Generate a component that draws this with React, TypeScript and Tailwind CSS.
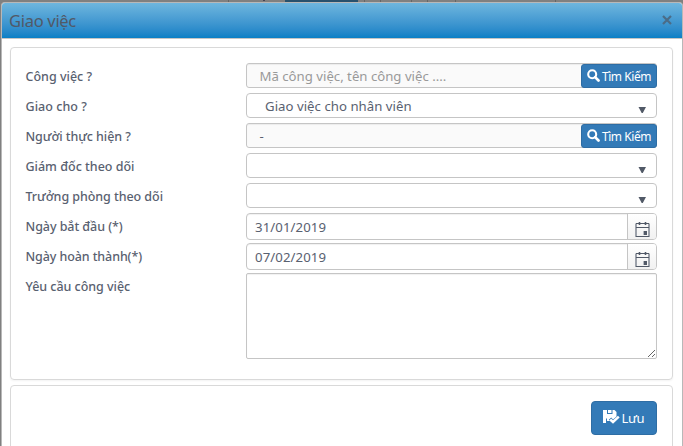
import type { ReactNode } from "react";

function Row({ label, tracking, children }: { label: string; tracking: string; children: ReactNode }) {
  return (
    <div className="flex h-[30px] items-start">
      <label className={`w-[221px] shrink-0 whitespace-nowrap pl-[0.5px] text-[12.5px] leading-[28px] font-medium text-[#596170] ${tracking}`}>
        {label}
      </label>
      {children}
    </div>
  );
}

function SearchField({ children }: { children: ReactNode }) {
  return (
    <div className="flex h-[25px] w-[411px] rounded-[3px] border border-[#c5c5c5] bg-[#fafafa] shadow-[inset_0_1px_1px_rgba(0,0,0,0.06)]">
      <div className="flex-1 whitespace-nowrap pl-[12.5px] text-[13.2px] leading-[25px]">{children}</div>
      <button className="-mr-px -mb-px flex h-6 w-[76px] items-center rounded-[3px] border border-[#2e6da4] bg-[#337ab7] pl-[5px] text-white">
        <svg width="13" height="13" viewBox="0 0 13 13" className="mt-[-1px] shrink-0">
          <circle cx="5.2" cy="5.2" r="4" fill="none" stroke="currentColor" strokeWidth="2.1" />
          <path d="M8.1 8.1 L11.5 11.5" stroke="currentColor" strokeWidth="2.7" strokeLinecap="round" />
        </svg>
        <span className="ml-[2px] whitespace-nowrap pt-px text-[12px] leading-5 tracking-[-0.45px]">Tìm Kiếm</span>
      </button>
    </div>
  );
}

function SelectField({ value }: { value?: string }) {
  return (
    <div className="flex h-[25px] w-[411px] justify-between rounded-[4px] border border-[#c5c5c5] bg-white pr-[10px] pl-[18px]">
      <span className="text-[13.2px] leading-[25px] tracking-[0.03px]">{value}</span>
      <svg width="8" height="6" viewBox="0 0 8 6" className="mt-[13px]">
        <path d="M0.5 0H8L4.8 6H3.7Z" fill="#515967" />
      </svg>
    </div>
  );
}

function DateField({ value }: { value: string }) {
  return (
    <div className="flex h-[27px] w-[411px] overflow-hidden rounded-[4px] border border-[#c5c5c5] bg-white shadow-[inset_0_1px_1px_rgba(0,0,0,0.06)]">
      <span className="flex-1 pl-2 text-[13.2px] leading-[26px] tracking-[0.1px]">{value}</span>
      <span className="flex w-[29px] border-l border-[#c5c5c5] bg-linear-to-b from-white to-[#f1f1f1] pt-2 pl-[7px]">
        <svg width="15" height="16" viewBox="0 0 15 16" fill="none">
          <path d="M1 1.5V15M14 1.5V15" stroke="#9ca1aa" strokeWidth="2" />
          <path d="M1 1.5H14M1 5.5H14M1 14.5H14" stroke="#515967" />
          <path d="M4.5 0V3M10.5 0V3" stroke="#515967" strokeWidth="1.6" />
          <path d="M8 9H10V13H8Z" fill="#b5b8be" />
          <path d="M9 9H12V13H9Z" fill="#515967" />
        </svg>
      </span>
    </div>
  );
}

export default function App() {
  return (
    <div className="flex h-[446px] w-[683px] flex-col overflow-hidden bg-[#808080] pl-px font-['Noto_Sans','Open_Sans',sans-serif] text-[#596170]">
      <div className="flex h-[2px] shrink-0">
        <span className="w-[7px]" />
        <span className="ml-[220px] w-px bg-[#666]" />
        <span className="ml-[34px] h-px w-[2px] bg-[#445]" />
        <span className="ml-[20px] w-[73px] bg-[#28516d]" />
        <span className="ml-[6px] w-px bg-[#666]" />
        <span className="ml-[15px] w-px bg-[#666]" />
        <span className="ml-[30px] w-px bg-[#666]" />
        <span className="ml-[15px] w-px bg-[#666]" />
        <span className="ml-[27px] w-px bg-[#666]" />
        <span className="ml-[99px] w-px bg-[#666]" />
      </div>
      <main className="min-h-0 flex-1 overflow-hidden rounded-t-[4px] border border-b-0 border-[#b8b8b8] bg-white">
        <header className="flex h-9 items-center justify-between border-b border-[#c5c5c5] bg-linear-to-b from-[#6eb6de] to-[#087fc5] pr-[10px] pl-[7px]">
          <h1 className="text-[16.5px] leading-[34px] tracking-[-0.3px] text-[#515967]">Giao việc</h1>
          <svg width="10" height="10" viewBox="0 0 10 10" className="mt-[-1px]">
            <path d="M1 1L9 9M9 1L1 9" stroke="#4b6c87" strokeWidth="2.2" />
          </svg>
        </header>
        <section className="mt-2 ml-2 h-[333px] w-[663px] rounded-[4px] border border-[#d9d9d9] pt-[15px] pl-[14px] shadow-[0_1px_2px_rgba(0,0,0,0.05)]">
          <Row label="Công việc ?" tracking="tracking-[0px]">
            <SearchField><span className="text-[#999]">Mã công việc, tên công việc ....</span></SearchField>
          </Row>
          <Row label="Giao cho ?" tracking="tracking-[0.05px]"><SelectField value="Giao việc cho nhân viên" /></Row>
          <Row label="Người thực hiện ?" tracking="tracking-[-0.08px]"><SearchField>-</SearchField></Row>
          <Row label="Giám đốc theo dõi" tracking="tracking-[0px]"><SelectField /></Row>
          <Row label="Trưởng phòng theo dõi" tracking="tracking-[-0.06px]"><SelectField /></Row>
          <Row label="Ngày bắt đầu (*)" tracking="tracking-[-0.06px]"><DateField value="31/01/2019" /></Row>
          <Row label="Ngày hoàn thành(*)" tracking="tracking-[-0.1px]"><DateField value="07/02/2019" /></Row>
          <Row label="Yêu cầu công việc" tracking="tracking-[-0.03px]">
            <textarea className="h-[86px] w-[411px] shrink-0 resize rounded-[2px] border border-[#c5c5c5] bg-white shadow-[inset_0_1px_1px_rgba(0,0,0,0.06)]" />
          </Row>
        </section>
        <footer className="mt-[5px] ml-2 flex h-20 w-[663px] items-start justify-end rounded-[4px] border border-[#d9d9d9] pt-[15px] pr-[15px]">
          <button className="flex h-[34px] w-[66px] items-center rounded-[4px] border border-[#2e6da4] bg-[#337ab7] pl-[11px] text-white">
            <svg width="17" height="14" viewBox="0 0 17 14" className="mt-[-3px] shrink-0">
              <path d="M0 0H11.5L13.5 2V6.5L10 9.4L8.2 7.5L5.8 9.8L7 11H4V8.5H3V13H0Z" fill="currentColor" />
              <path d="M4 0H5V3H8.5V0H9.5V4H4Z" fill="#337ab7" />
              <path d="M7.2 9.5L10 12L15.8 6.7" fill="none" stroke="currentColor" strokeWidth="2.5" />
            </svg>
            <span className="ml-[1.5px] text-[13px] leading-5 tracking-[-0.3px]">Lưu</span>
          </button>
        </footer>
      </main>
    </div>
  );
}
